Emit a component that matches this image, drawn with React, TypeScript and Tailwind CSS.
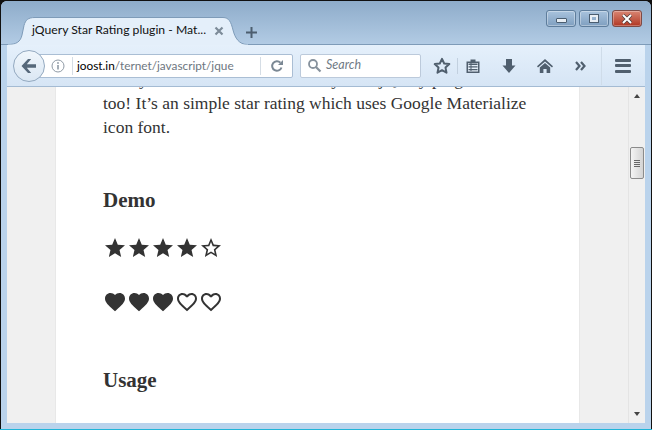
import React from "react";

const ui = { fontFamily: 'Lato, "Open Sans", sans-serif' };
const ICON = "#505f6e";

function Star({ filled }: { filled: boolean }) {
  return (
    <svg width="24" height="24" viewBox="0 0 24 24" className="block">
      {filled ? (
        <path fill="#333" d="M12 17.27 18.18 21l-1.64-7.03L22 9.24l-7.19-.61L12 2 9.19 8.63 2 9.24l5.46 4.73L5.82 21z" />
      ) : (
        <path fill="#333" d="M22 9.24l-7.19-.62L12 2 9.19 8.63 2 9.24l5.46 4.73L5.82 21 12 17.27 18.18 21l-1.63-7.03L22 9.24zM12 15.4l-3.76 2.27 1-4.28-3.32-2.88 4.38-.38L12 6.1l1.71 4.04 4.38.38-3.32 2.88 1 4.28L12 15.4z" />
      )}
    </svg>
  );
}

function Heart({ filled }: { filled: boolean }) {
  return (
    <svg width="24" height="24" viewBox="0 0 24 24" className="block">
      {filled ? (
        <path fill="#333" d="M12 21.35l-1.45-1.32C5.4 15.36 2 12.28 2 8.5 2 5.42 4.42 3 7.5 3c1.74 0 3.41.81 4.5 2.09C13.09 3.81 14.76 3 16.5 3 19.58 3 22 5.42 22 8.5c0 3.78-3.4 6.86-8.55 11.54L12 21.35z" />
      ) : (
        <path fill="#333" d="M16.5 3c-1.74 0-3.41.81-4.5 2.09C10.91 3.81 9.24 3 7.5 3 4.42 3 2 5.42 2 8.5c0 3.78 3.4 6.86 8.55 11.54L12 21.35l1.45-1.32C18.6 15.36 22 12.28 22 8.5 22 5.42 19.58 3 16.5 3zm-4.4 15.55l-.1.1-.1-.1C7.14 14.24 4 11.39 4 8.5 4 6.5 5.5 5 7.5 5c1.54 0 3.04.99 3.57 2.36h1.87C13.46 5.99 14.96 5 16.5 5c2 0 3.5 1.5 3.5 3.5 0 2.89-3.14 5.74-7.9 10.05z" />
      )}
    </svg>
  );
}

function TabShape() {
  return (
    <svg width="240" height="29" viewBox="0 0 240 29" className="absolute left-0 top-0 block">
      <path
        d="M0 27.5 C8 27.5 12.5 25 14 18 L16 8.5 C17.5 3 20 .5 27 .5 L215 .5 C221 .5 223 5 225 13 C227 21 231 27.5 239.5 27.5 L239.5 29 L0 29 Z"
        fill="#e4effa"
        stroke="#7e9bb8"
        strokeWidth="1"
      />
      <rect x="0" y="27.6" width="240" height="2" fill="#e4effa" />
    </svg>
  );
}

export default function App() {
  return (
    <div className="w-[652px] h-[430px] overflow-hidden bg-[#101010] pt-[1px] flex flex-col">
      <div className="flex-1 min-h-0 flex flex-col rounded-t-[6px] overflow-hidden bg-[#bad3ec] mx-[1px] px-[6px] pb-[6px]">
        {/* title bar */}
        <div className="h-[44px] shrink-0 -mx-[6px] pl-[7px] pr-[6px] bg-gradient-to-b from-[#8eacca] to-[#b2cbe4] flex flex-col border-b border-[#7e9bb8]">
          <div className="flex justify-end gap-[3px] pt-[9px] pr-[3px] h-0">
            <div className="w-[30px] h-[17px] rounded-[3px] border border-[#5e7d9c] bg-gradient-to-b from-[#a9c3dd] to-[#7f9fc0] shadow-[inset_0_0_0_1px_rgba(255,255,255,0.35)] flex items-center justify-center">
              <div className="w-[11px] h-[5px] bg-[#e8eef4] border border-[#4a5d70] rounded-[1px] mt-[4px]" />
            </div>
            <div className="w-[30px] h-[17px] rounded-[3px] border border-[#5e7d9c] bg-gradient-to-b from-[#a9c3dd] to-[#7f9fc0] shadow-[inset_0_0_0_1px_rgba(255,255,255,0.35)] flex items-center justify-center">
              <div className="w-[8px] h-[7px] border-2 border-[#e8eef4] outline outline-1 outline-[#4a5d70]" />
            </div>
            <div className="w-[30px] h-[17px] rounded-[3px] border border-[#7d4a45] bg-gradient-to-b from-[#d98572] to-[#b03522] shadow-[inset_0_0_0_1px_rgba(255,255,255,0.3)] flex items-center justify-center">
              <svg width="12" height="10" viewBox="0 0 12 10" className="block">
                <path d="M2 1l8 8M10 1L2 9" stroke="#4a3a3a" strokeWidth="3.4" />
                <path d="M2 1l8 8M10 1L2 9" stroke="#fff" strokeWidth="2" />
              </svg>
            </div>
          </div>
          <div className="mt-auto flex items-end">
            <div className="relative w-[240px] h-[28px] shrink-0 -mb-px">
              <TabShape />
              <div className="relative h-full flex items-center pl-[24px] pt-[1px] pb-[2px]">
                <span className="w-[175px] shrink-0 text-[12.2px] text-[#111] whitespace-nowrap" style={ui}>jQuery Star Rating plugin - Mat...</span>
                <svg width="10" height="10" viewBox="0 0 10 10" className="shrink-0 ml-[7px]">
                  <path d="M1.5 1.5l7 7M8.5 1.5l-7 7" stroke="#7d8b99" strokeWidth="2.2" />
                </svg>
              </div>
            </div>
            <div className="pb-[6px] shrink-0 -ml-[2px]">
              <svg width="11" height="11" viewBox="0 0 11 11" className="block">
                <path d="M5.5 0v11M0 5.5h11" stroke="#4d5e6f" strokeWidth="2" />
              </svg>
            </div>
          </div>
        </div>

        {/* nav bar */}
        <div className="h-[42px] shrink-0 bg-gradient-to-b from-[#e5f0fb] to-[#d6e5f5] border-b border-[#a4bbd3] flex items-center relative">
          <div className="flex items-center h-[24px] w-[263px] bg-white border border-[#aabed4] rounded-r-[2px] ml-[23px] pl-[20px] shrink-0">
            <svg width="14" height="14" viewBox="0 0 14 14" className="shrink-0">
              <circle cx="7" cy="7" r="6" fill="none" stroke="#8f9aa5" strokeWidth="1" />
              <circle cx="7" cy="4" r="0.9" fill="#8f9aa5" />
              <path d="M7 6v4.5" stroke="#8f9aa5" strokeWidth="1.6" />
            </svg>
            <div className="w-px h-[18px] bg-[#d5dde5] ml-[7px] shrink-0" />
            <div className="w-[170px] ml-[4px] whitespace-nowrap text-[11.8px] leading-[20px] text-[#6d7680] shrink-0" style={ui}>
              <span className="text-black">joost.in</span>/ternet/javascript/jque
            </div>
            <div className="w-px h-[18px] bg-[#d5dde5] ml-[13px] shrink-0" />
            <div className="flex-1 flex justify-center">
              <svg width="14" height="14" viewBox="0 0 14 14">
                <path d="M11.5 8.5A4.8 4.8 0 1 1 10.4 3.6" fill="none" stroke="#7b8894" strokeWidth="2" />
                <path d="M8 6h5V1z" fill="#7b8894" />
              </svg>
            </div>
          </div>
          <div className="absolute left-[6px] top-[5px] w-[32px] h-[32px] rounded-full border border-[#93a9c0] bg-gradient-to-b from-[#f0f6fc] to-[#dbe7f3] flex items-center justify-center">
            <svg width="18" height="18" viewBox="0 0 18 16">
              <path d="M8 1L1.5 8 8 15h3.2L6.8 9.8H16V6.2H6.8L11.2 1z" fill="#56687a" />
            </svg>
          </div>
          <div className="flex items-center h-[24px] w-[121px] bg-white border border-[#bccadb] rounded-[2px] ml-[7px] pl-[6px] gap-[4px] shrink-0">
            <svg width="15" height="15" viewBox="0 0 15 15" className="shrink-0">
              <circle cx="6" cy="6" r="4" fill="none" stroke="#87929d" strokeWidth="1.8" />
              <path d="M9 9l4.5 4.5" stroke="#87929d" strokeWidth="2.2" />
            </svg>
            <span className="text-[12.5px] italic text-[#6f7a85]" style={ui}>Search</span>
          </div>
          <div className="ml-[12px] shrink-0">
            <svg width="18" height="18" viewBox="0 0 18 18" className="block">
              <path d="M9 1.8l2.2 4.7 5.1.6-3.8 3.5 1 5.1L9 13.2l-4.5 2.5 1-5.1L1.7 7.1l5.1-.6z" fill="none" stroke={ICON} strokeWidth="2" strokeLinejoin="round" />
            </svg>
          </div>
          <div className="w-px h-[16px] bg-[#c2d0df] ml-[6px] shrink-0" />
          <div className="ml-[7px] shrink-0">
            <svg width="16" height="16" viewBox="0 0 16 16" className="block">
              <path d="M1.5 3.5h4V1.5h5v2h4V15h-13z" fill={ICON} />
              <path d="M3 5h10v8.5H3z" fill="#e4eef8" />
              <path d="M3.5 5.5h9v1.4h-9zM3.5 8.2h9v1.4h-9zM3.5 10.9h9v1.4h-9zM5.5 5h1v8h-1z" fill={ICON} />
            </svg>
          </div>
          <div className="ml-[20px] shrink-0">
            <svg width="16" height="16" viewBox="0 0 16 16" className="block">
              <path d="M5 1h6v6.5h3.5L8 15 1.5 7.5H5z" fill={ICON} />
            </svg>
          </div>
          <div className="ml-[19px] shrink-0">
            <svg width="18" height="16" viewBox="0 0 18 16" className="block">
              <path d="M9 1l8 7.2-1 1.2L9 3.4 2 9.4 1 8.2z" fill={ICON} />
              <path d="M3.8 9.4L9 5l5.2 4.4V15h-3.6v-4H7.4v4H3.8z" fill={ICON} />
            </svg>
          </div>
          <div className="ml-[21px] shrink-0">
            <svg width="12" height="10" viewBox="0 0 12 10" className="block">
              <path d="M1 1l3.5 4L1 9M6 1l3.5 4L6 9" fill="none" stroke={ICON} strokeWidth="2.2" />
            </svg>
          </div>
          <div className="w-px h-[38px] bg-[#cfdce9] ml-[14px] shrink-0" />
          <div className="ml-[13px] flex flex-col gap-[2.5px] shrink-0">
            <div className="w-[16px] h-[3px] rounded-[1px] bg-[#505f6e]" />
            <div className="w-[16px] h-[3px] rounded-[1px] bg-[#505f6e]" />
            <div className="w-[16px] h-[3px] rounded-[1px] bg-[#505f6e]" />
          </div>
        </div>

        {/* viewport */}
        <div className="flex-1 min-h-0 flex bg-[#f0f0f0] overflow-hidden">
          <div className="w-[48px] shrink-0 border-r border-[#e8e8e8] box-content" />
          <div className="w-[523px] shrink-0 bg-white pl-[47px] pr-[46px] overflow-hidden text-[#333]" style={{ fontFamily: '"Liberation Serif", serif' }}>
            <p className="text-[17.5px] leading-[24px] mt-[-20px] whitespace-nowrap">Lately I created some other of my own jQuery plugin</p>
            <p className="text-[17.5px] leading-[24px]">too! It’s an simple star rating which uses Google Materialize icon font.</p>
            <h2 className="text-[21px] leading-[25px] font-bold mt-[49px]">Demo</h2>
            <div className="flex mt-[23px]">
              {[1, 1, 1, 1, 0].map((f, i) => <Star key={i} filled={!!f} />)}
            </div>
            <div className="flex mt-[30px]">
              {[1, 1, 1, 0, 0].map((f, i) => <Heart key={i} filled={!!f} />)}
            </div>
            <h2 className="text-[21px] leading-[25px] font-bold mt-[54px]">Usage</h2>
          </div>
          <div className="w-[49px] shrink-0 border-l border-[#e8e8e8]" />
          <div className="w-[16px] shrink-0 border-l border-[#e4e4e4] bg-[#f0f0f0] flex flex-col items-center">
            <div className="w-0 h-0 mt-[7px] border-x-[3.5px] border-x-transparent border-b-[4px] border-b-[#444]" />
            <div className="w-[14px] h-[32px] mt-[49px] rounded-[2px] border border-[#8b8b8b] bg-gradient-to-r from-[#f4f4f4] to-[#d4d4d4] flex flex-col items-center justify-center gap-[1px]">
              <div className="w-[6px] h-px bg-[#666]" />
              <div className="w-[6px] h-px bg-[#666]" />
              <div className="w-[6px] h-px bg-[#666]" />
              <div className="w-[6px] h-px bg-[#666]" />
            </div>
            <div className="w-0 h-0 mt-auto mb-[7px] border-x-[3.5px] border-x-transparent border-t-[4px] border-t-[#444]" />
          </div>
        </div>
      </div>
      <div className="h-[1px] shrink-0 bg-[#1fb5d8]" />
    </div>
  );
}
